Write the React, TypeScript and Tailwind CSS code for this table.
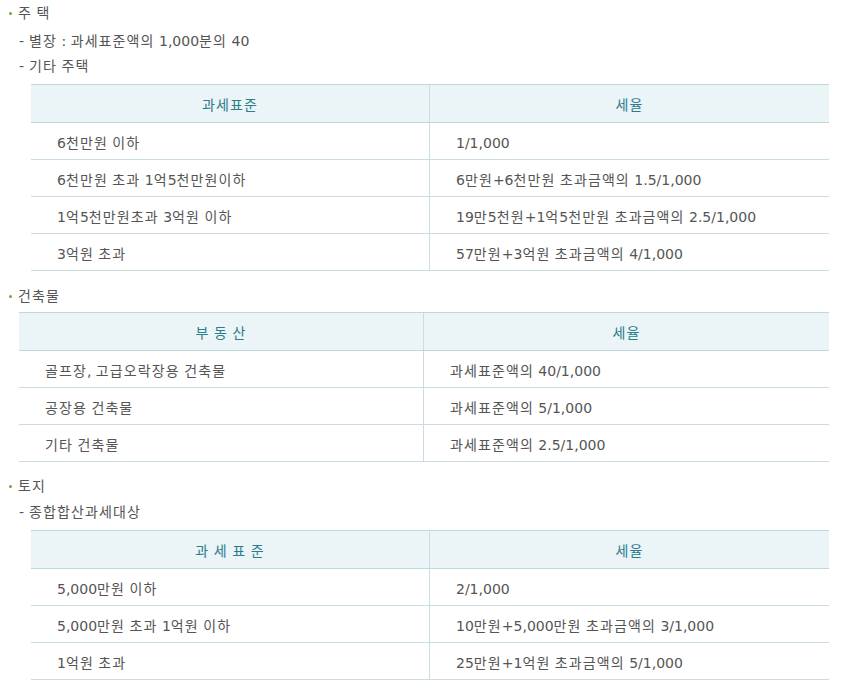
import React from 'react';

type Row = [string, string];

const house: Row[] = [
  ['6천만원 이하', '1/1,000'],
  ['6천만원 초과 1억5천만원이하', '6만원+6천만원 초과금액의 1.5/1,000'],
  ['1억5천만원초과 3억원 이하', '19만5천원+1억5천만원 초과금액의 2.5/1,000'],
  ['3억원 초과', '57만원+3억원 초과금액의 4/1,000'],
];

const building: Row[] = [
  ['골프장, 고급오락장용 건축물', '과세표준액의 40/1,000'],
  ['공장용 건축물', '과세표준액의 5/1,000'],
  ['기타 건축물', '과세표준액의 2.5/1,000'],
];

const land: Row[] = [
  ['5,000만원 이하', '2/1,000'],
  ['5,000만원 초과 1억원 이하', '10만원+5,000만원 초과금액의 3/1,000'],
  ['1억원 초과', '25만원+1억원 초과금액의 5/1,000'],
];

// hangul glyphs in the original font are a bit wider, so track them out
function T({ s }: { s: string }) {
  return (
    <span className="whitespace-pre">
      {s.split(/([가-힣]+)/).map((p, i) =>
        /[가-힣]/.test(p) ? (
          <span key={i} className="tracking-[1.1px]">
            {p}
          </span>
        ) : (
          p
        )
      )}
    </span>
  );
}

function Bullet({ text, className = '' }: { text: string; className?: string }) {
  return (
    <div className={`flex items-center h-[24px] pl-[9px] pt-[3px] ${className}`}>
      <span className="w-[3px] h-[3px] rounded-full bg-[#6aab3a] mr-[6px]" />
      <T s={text} />
    </div>
  );
}

function Dash({ text, className = '' }: { text: string; className?: string }) {
  return (
    <div className={`flex items-center h-[24px] pl-[19px] pt-[3px] ${className}`}>
      <span className="mr-[5px]">-</span>
      <T s={text} />
    </div>
  );
}

function RateTable({ head, rows, className = '' }: { head: string; rows: Row[]; className?: string }) {
  return (
    <div className={`mr-[14px] ${className}`}>
      <div className="grid grid-cols-2 h-[39px] bg-[#ebf4f6] border-y border-[#bfd8de] text-[#2b7c8c]">
        <div className="flex items-center justify-center pt-[4px] border-r border-[#c9dde2]">
          <T s={head} />
        </div>
        <div className="flex items-center justify-center pt-[4px]">
          <T s="세율" />
        </div>
      </div>
      {rows.map(([a, b]) => (
        <div key={a} className="grid grid-cols-2 h-[37px] border-b border-[#c9dde2]">
          <div className="flex items-center pl-[26px] pt-[5px] border-r border-[#c9dde2]">
            <T s={a} />
          </div>
          <div className="flex items-center pl-[26px] pt-[5px]">
            <T s={b} />
          </div>
        </div>
      ))}
    </div>
  );
}

export default function App() {
  return (
    <div className="w-[843px] h-[680px] overflow-hidden bg-white text-[14px] text-[#555] font-['DejaVu_Sans','Noto_Sans_CJK_KR',sans-serif]">
      <Bullet text="주 택" />
      <Dash text="별장 : 과세표준액의 1,000분의 40" className="mt-[4px]" />
      <Dash text="기타 주택" className="mt-[1px]" />
      <RateTable head="과세표준" rows={house} className="ml-[31px] mt-[7px]" />

      <Bullet text="건축물" className="mt-[12px]" />
      <RateTable head="부 동 산" rows={building} className="ml-[19px] mt-[5px]" />

      <Bullet text="토지" className="mt-[11px]" />
      <Dash text="종합합산과세대상" className="mt-[2px]" />
      <RateTable head="과 세 표 준" rows={land} className="ml-[31px] mt-[7px]" />
    </div>
  );
}
